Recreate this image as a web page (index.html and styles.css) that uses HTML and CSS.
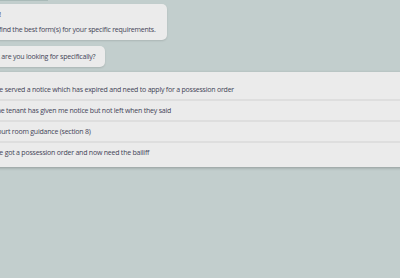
FILE: index.html
```html
<!DOCTYPE html>
<html>
<head>
<meta charset="utf-8">
<link rel="stylesheet" href="styles.css">
</head>
<body>
<div class="chat">
  <div class="prev"></div>
  <div class="bubble b1">
    <p>Hello!</p>
    <p>Let's find the best form(s) for your specific requirements.</p>
  </div>
  <div class="bubble b2">
    <p>What are you looking for specifically?</p>
  </div>
  <div class="options">
    <div class="opt">I've served a notice which has expired and need to apply for a possession order</div>
    <div class="opt">The tenant has given me notice but not left when they said</div>
    <div class="opt">Court room guidance (section 8)</div>
    <div class="opt">I've got a possession order and now need the bailiff</div>
  </div>
</div>
</body>
</html>
```
FILE: styles.css
```css
html, body {
  margin: 0;
  padding: 0;
  background: #c2cecd;
  overflow: hidden;
}
body {
  width: 400px;
  height: 278px;
  font-family: "Open Sans", "DejaVu Sans", sans-serif;
  color: #434457;
  font-size: 7px;
  letter-spacing: -0.22px;
}
.chat {
  margin-left: -40px;
  width: 460px;
  display: flex;
  flex-direction: column;
  align-items: flex-start;
}
.prev {
  width: 88px;
  height: 1px;
  background: #a9bab8;
}
.bubble {
  background: #ebebeb;
  border-radius: 5px;
  box-shadow: 0 1px 2px rgba(0,0,0,0.12);
  padding: 0 11px 0 23.5px;
}
.bubble p {
  margin: 0;
  line-height: 15px;
}
.b1 {
  margin-top: 3px;
  padding-top: 3px;
  padding-bottom: 3px;
}
.b2 {
  margin-top: 6px;
  padding-top: 3px;
  padding-bottom: 3px;
  padding-right: 10px;
}
.options {
  margin-top: 5px;
  align-self: stretch;
  background: #ebebeb;
  box-shadow: 0 1px 3px rgba(0,0,0,0.25);
  padding: 8px 0 5px;
}
.opt {
  line-height: 19px;
  padding-left: 33px;
  border-bottom: 2px solid #dedede;
}
.opt:last-child {
  border-bottom: none;
}
```
